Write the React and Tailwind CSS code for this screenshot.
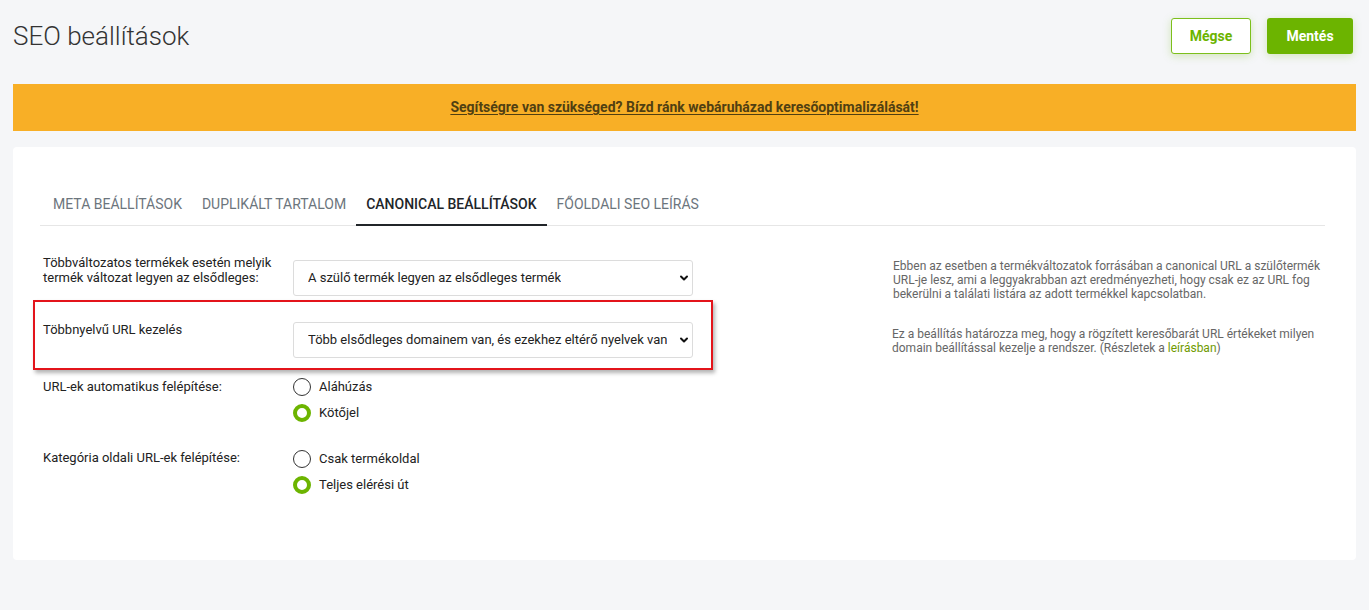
import { ChevronDown } from "lucide-react";

const tabs = [
  { label: "Meta beállítások", active: false },
  { label: "Duplikált tartalom", active: false },
  { label: "Canonical beállítások", active: true },
  { label: "Főoldali SEO leírás", active: false },
];

function FakeSelect({ value }) {
  return (
    <div className="flex h-[36px] w-[400px] shrink-0 items-center justify-between rounded-[3px] border border-[#dcdcdc] bg-white pl-[14px] pr-[2px] text-[13px] text-[#222]">
      <span className="truncate">{value}</span>
      <ChevronDown size={12} strokeWidth={4} className="shrink-0 text-[#111]" />
    </div>
  );
}

function Radio({ label, checked }) {
  return (
    <div className="flex h-[26px] items-center gap-[8px] text-[13px] text-[#222]">
      {checked ? (
        <span className="h-[18px] w-[18px] rounded-full border-[4px] border-[#6cb400] bg-white"></span>
      ) : (
        <span className="h-[18px] w-[18px] rounded-full border-[1.5px] border-[#333] bg-white"></span>
      )}
      <span>{label}</span>
    </div>
  );
}

export default function App() {
  return (
    <div className="min-h-[610px] bg-[#f5f6f8] px-[13px] pt-[18px] font-['Roboto',sans-serif] text-[#222]">
      <div className="flex items-center justify-between pr-[3px]">
        <h1 className="text-[26px] font-light leading-[30px] text-[#333]">SEO beállítások</h1>
        <div className="flex gap-[16px]">
          <button className="h-[36px] w-[80px] rounded-[3px] border border-[#7cbf1c] bg-white text-[14px] font-bold text-[#6cb400] shadow-[0_2px_8px_rgba(108,180,0,0.25)]">
            Mégse
          </button>
          <button className="h-[36px] w-[86px] rounded-[3px] bg-[#6cb400] text-[14px] font-bold text-white shadow-[0_2px_8px_rgba(108,180,0,0.25)]">
            Mentés
          </button>
        </div>
      </div>

      <div className="mt-[30px] flex h-[47px] items-center justify-center bg-[#f8af26]">
        <a className="text-[14px] font-bold text-[#503f12] underline underline-offset-2">
          Segítségre van szükséged? Bízd ránk webáruházad keresőoptimalizálását!
        </a>
      </div>

      <div className="mt-[16px] h-[413px] rounded-[4px] bg-white pl-[27px] pr-[31px] pt-[37px]">
        <ul className="flex border-b border-[#e6e6e6] pl-[3px]">
          {tabs.map((t) => (
            <li
              key={t.label}
              className={
                t.active
                  ? "-mb-px border-b-2 border-[#212529] px-[10px] py-[10px] text-[14px] font-medium uppercase leading-[20px] text-[#212529]"
                  : "px-[10px] py-[10px] text-[14px] uppercase leading-[20px] text-[#6c757d]"
              }
            >
              {t.label}
            </li>
          ))}
        </ul>

        <div className="mt-[29px] pl-[3px]">
          <div className="flex h-[45px] items-start">
            <div className="w-[250px] text-[13px] leading-[15px] text-[#222]">
              Többváltozatos termékek esetén melyik termék változat legyen az elsődleges:
            </div>
            <div className="mt-[5px]">
              <FakeSelect value="A szülő termék legyen az elsődleges termék" />
            </div>
            <p className="ml-[200px] mt-[4px] w-[432px] text-[12px] leading-[14px] text-[#666]">
              Ebben az esetben a termékváltozatok forrásában a canonical URL a szülőtermék URL-je lesz, ami a leggyakrabban azt eredményezheti, hogy csak ez az URL fog bekerülni a találati listára az adott termékkel kapcsolatban.
            </p>
          </div>

          <div className="flex items-start">
            <div className="-ml-[10px] flex h-[70px] w-[680px] items-start border-2 border-[#e3141b] pl-[8px] pt-[20px] shadow-[2px_3px_4px_rgba(0,0,0,0.3)]">
              <div className="w-[250px] text-[13px] leading-[15px] text-[#222]">Többnyelvű URL kezelés</div>
              <FakeSelect value="Több elsődleges domainem van, és ezekhez eltérő nyelvek van" />
            </div>
            <p className="ml-[179px] mt-[27px] w-[432px] text-[12px] leading-[14px] text-[#666]">
              Ez a beállítás határozza meg, hogy a rögzített keresőbarát URL értékeket milyen domain beállítással kezelje a rendszer. (Részletek a <a className="text-[#6f9a00]">leírásban</a>)
            </p>
          </div>

          <div className="mt-[4px] flex items-start">
            <div className="w-[250px] pt-[5px] text-[13px] leading-[16px] text-[#222]">URL-ek automatikus felépítése:</div>
            <div>
              <Radio label="Aláhúzás" />
              <Radio label="Kötőjel" checked />
            </div>
          </div>

          <div className="mt-[20px] flex items-start">
            <div className="w-[250px] pt-[4px] text-[13px] leading-[16px] text-[#222]">Kategória oldali URL-ek felépítése:</div>
            <div>
              <Radio label="Csak termékoldal" />
              <Radio label="Teljes elérési út" checked />
            </div>
          </div>
        </div>
      </div>
    </div>
  );
}
